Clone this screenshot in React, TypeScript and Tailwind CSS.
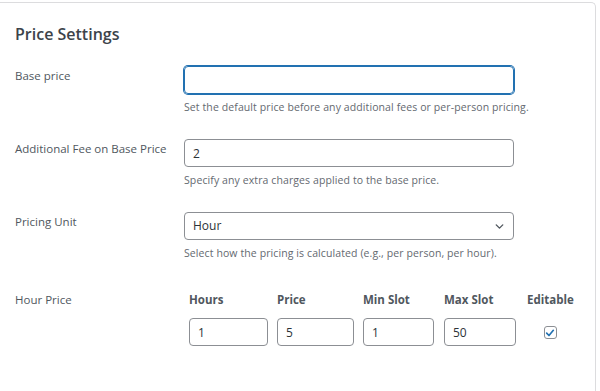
import { ChevronDown } from "lucide-react";

const font = { fontFamily: '"Open Sans", "Noto Sans", sans-serif' };

const Field = ({
  label,
  help,
  children,
  className,
}: {
  label: string;
  help: string;
  children: React.ReactNode;
  className?: string;
}) => (
  <div className={`flex ${className ?? ""}`}>
    <div className="w-[169px] shrink-0 pt-[2px] text-[11.5px] leading-[16px] text-[#50575e]">
      {label}
    </div>
    <div className="w-[330px]">
      {children}
      <p className="mt-[6px] text-[10.5px] leading-[14px] tracking-[0.1px] whitespace-nowrap text-[#646970]">
        {help}
      </p>
    </div>
  </div>
);

const App = () => {
  const cols = [
    { title: "Hours", value: "1", w: "w-[79px]", col: "w-[88px]" },
    { title: "Price", value: "5", w: "w-[77px]", col: "w-[86px]" },
    { title: "Min Slot", value: "1", w: "w-[71px]", col: "w-[81px]" },
    { title: "Max Slot", value: "50", w: "w-[72px]", col: "w-[83px]" },
  ];

  return (
    <div className="h-[391px] w-[600px] overflow-hidden bg-white" style={font}>
      <div className="mt-[2px] h-[400px] w-[596px] rounded-tr-[5px] border-t border-r border-[#dcdcde] bg-white pl-[15px]">
        <h2 className="mt-[21px] text-[16px] font-semibold leading-[20px] text-[#3c434a]">
          Price Settings
        </h2>

        <Field
          label="Base price"
          help="Set the default price before any additional fees or per-person pricing."
          className="mt-[22px]"
        >
          <input
            className="block h-[28px] w-[330px] rounded-[4px] border border-[#2271b1] px-[8px] text-[12px] text-[#2c3338] shadow-[0_0_0_1px_#2271b1] outline-none"
            defaultValue=""
          />
        </Field>

        <Field
          label="Additional Fee on Base Price"
          help="Specify any extra charges applied to the base price."
          className="mt-[25px]"
        >
          <input
            className="block h-[28px] w-[330px] rounded-[4px] border border-[#8c8f94] px-[8px] text-[12px] text-[#2c3338] outline-none"
            defaultValue="2"
          />
        </Field>

        <Field
          label="Pricing Unit"
          help="Select how the pricing is calculated (e.g., per person, per hour)."
          className="mt-[25px]"
        >
          <div className="flex h-[28px] w-[330px] items-center justify-between rounded-[4px] border border-[#8c8f94] pr-[7px] pl-[8px] text-[12px] text-[#2c3338]">
            <span>Hour</span>
            <ChevronDown size={13} strokeWidth={2.6} className="text-[#50575e]" />
          </div>
        </Field>

        <div className="mt-[32px] flex">
          <div className="w-[169px] shrink-0 text-[11.5px] leading-[16px] text-[#50575e]">
            Hour Price
          </div>
          <div className="flex pl-[5px]">
            {cols.map((c) => (
              <div key={c.title} className={c.col}>
                <div className="text-[11.5px] leading-[16px] font-bold text-[#50575e]">
                  {c.title}
                </div>
                <input
                  className={`mt-[10px] block h-[28px] ${c.w} rounded-[4px] border border-[#8c8f94] px-[8px] text-[12px] text-[#2c3338] outline-none`}
                  defaultValue={c.value}
                />
              </div>
            ))}
            <div className="flex flex-col items-center">
              <div className="text-[11.5px] leading-[16px] font-bold text-[#50575e]">
                Editable
              </div>
              <div className="mt-[18px] flex h-[13px] w-[13px] items-center justify-center rounded-[3px] border border-[#8c8f94] bg-white">
                <svg viewBox="0 0 12 12" className="h-[10px] w-[10px]">
                  <path
                    d="M2 6.2 L4.8 9 L10 2.8"
                    fill="none"
                    stroke="#2271b1"
                    strokeWidth="2"
                    strokeLinecap="round"
                    strokeLinejoin="round"
                  />
                </svg>
              </div>
            </div>
          </div>
        </div>
      </div>
    </div>
  );
};

export default App;
